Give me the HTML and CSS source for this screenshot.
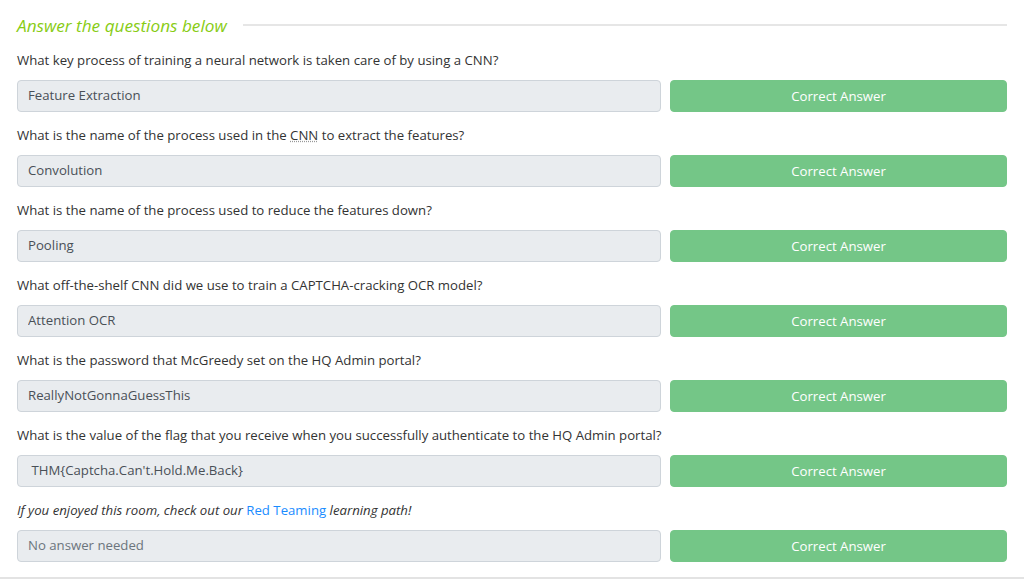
FILE: index.html
```html
<!DOCTYPE html>
<html lang="en">
<head>
  <meta charset="UTF-8">
  <meta name="viewport" content="width=device-width, initial-scale=1.0">
  <title>Answer the questions below</title>
  <link rel="stylesheet" href="styles.css">
</head>
<body>
  <div class="task">
    <h4 class="titulo"><span>Answer the questions below</span></h4>

    <div class="pergunta">
      <p>What key process of training a neural network is taken care of by using a CNN?</p>
      <div class="linha">
        <input type="text" class="resposta" value="Feature Extraction" disabled>
        <button class="correto">Correct Answer</button>
      </div>
    </div>

    <div class="pergunta">
      <p>What is the name of the process used in the <abbr title="Convolutional Neural Network">CNN</abbr> to extract the features?</p>
      <div class="linha">
        <input type="text" class="resposta" value="Convolution" disabled>
        <button class="correto">Correct Answer</button>
      </div>
    </div>

    <div class="pergunta">
      <p>What is the name of the process used to reduce the features down?</p>
      <div class="linha">
        <input type="text" class="resposta" value="Pooling" disabled>
        <button class="correto">Correct Answer</button>
      </div>
    </div>

    <div class="pergunta">
      <p>What off-the-shelf CNN did we use to train a CAPTCHA-cracking OCR model?</p>
      <div class="linha">
        <input type="text" class="resposta" value="Attention OCR" disabled>
        <button class="correto">Correct Answer</button>
      </div>
    </div>

    <div class="pergunta">
      <p>What is the password that McGreedy set on the HQ Admin portal?</p>
      <div class="linha">
        <input type="text" class="resposta" value="ReallyNotGonnaGuessThis" disabled>
        <button class="correto">Correct Answer</button>
      </div>
    </div>

    <div class="pergunta">
      <p>What is the value of the flag that you receive when you successfully authenticate to the HQ Admin portal?</p>
      <div class="linha">
        <input type="text" class="resposta" value=" THM{Captcha.Can't.Hold.Me.Back}" disabled>
        <button class="correto">Correct Answer</button>
      </div>
    </div>

    <div class="pergunta">
      <p><em>If you enjoyed this room, check out our</em> <a href="#">Red Teaming</a> <em>learning path!</em></p>
      <div class="linha">
        <input type="text" class="resposta" placeholder="No answer needed" disabled>
        <button class="correto">Correct Answer</button>
      </div>
    </div>
  </div>
  <div class="rodape"></div>
</body>
</html>
```

FILE: styles.css
```css
body {
  margin: 0;
  font-family: 'Open Sans', sans-serif;
  font-size: 13.2px;
  color: #333;
  background: white;
}
.task {
  padding: 15px 17px 0 17px;
  width: 990px;
}
.titulo {
  display: flex;
  align-items: center;
  gap: 16px;
  margin: 0 0 15px 0;
  height: 20px;
  font-size: 17.2px;
  font-weight: normal;
  font-style: italic;
  color: #88cc14;
}
.titulo::after {
  content: '';
  flex: 1;
  height: 2px;
  background: #e6e6e6;
}
.pergunta {
  margin-bottom: 13px;
}
.pergunta:last-child {
  margin-bottom: 0;
}
.pergunta p {
  margin: 0 0 10px 0;
  line-height: 20px;
}
.pergunta abbr {
  text-decoration: underline dotted #999;
}
.pergunta a {
  color: #1a8cff;
  text-decoration: none;
}
.linha {
  display: flex;
  gap: 9px;
}
.resposta {
  width: 644px;
  height: 32px;
  box-sizing: border-box;
  padding: 0 10px 2px 10px;
  background: #e9ecef;
  border: 1px solid #ced4da;
  border-radius: 4px;
  font-family: inherit;
  font-size: 13.2px;
  color: #495057;
}
.resposta::placeholder {
  color: #6c757d;
}
.correto {
  flex: 1;
  height: 32px;
  padding-bottom: 2px;
  background: #74c687;
  color: white;
  border: 1px solid #74c687;
  border-radius: 4px;
  font-family: inherit;
  font-size: 13.2px;
  cursor: pointer;
}
.rodape {
  height: 2px;
  background: #e3e3e3;
  margin-top: 15px;
}
```
